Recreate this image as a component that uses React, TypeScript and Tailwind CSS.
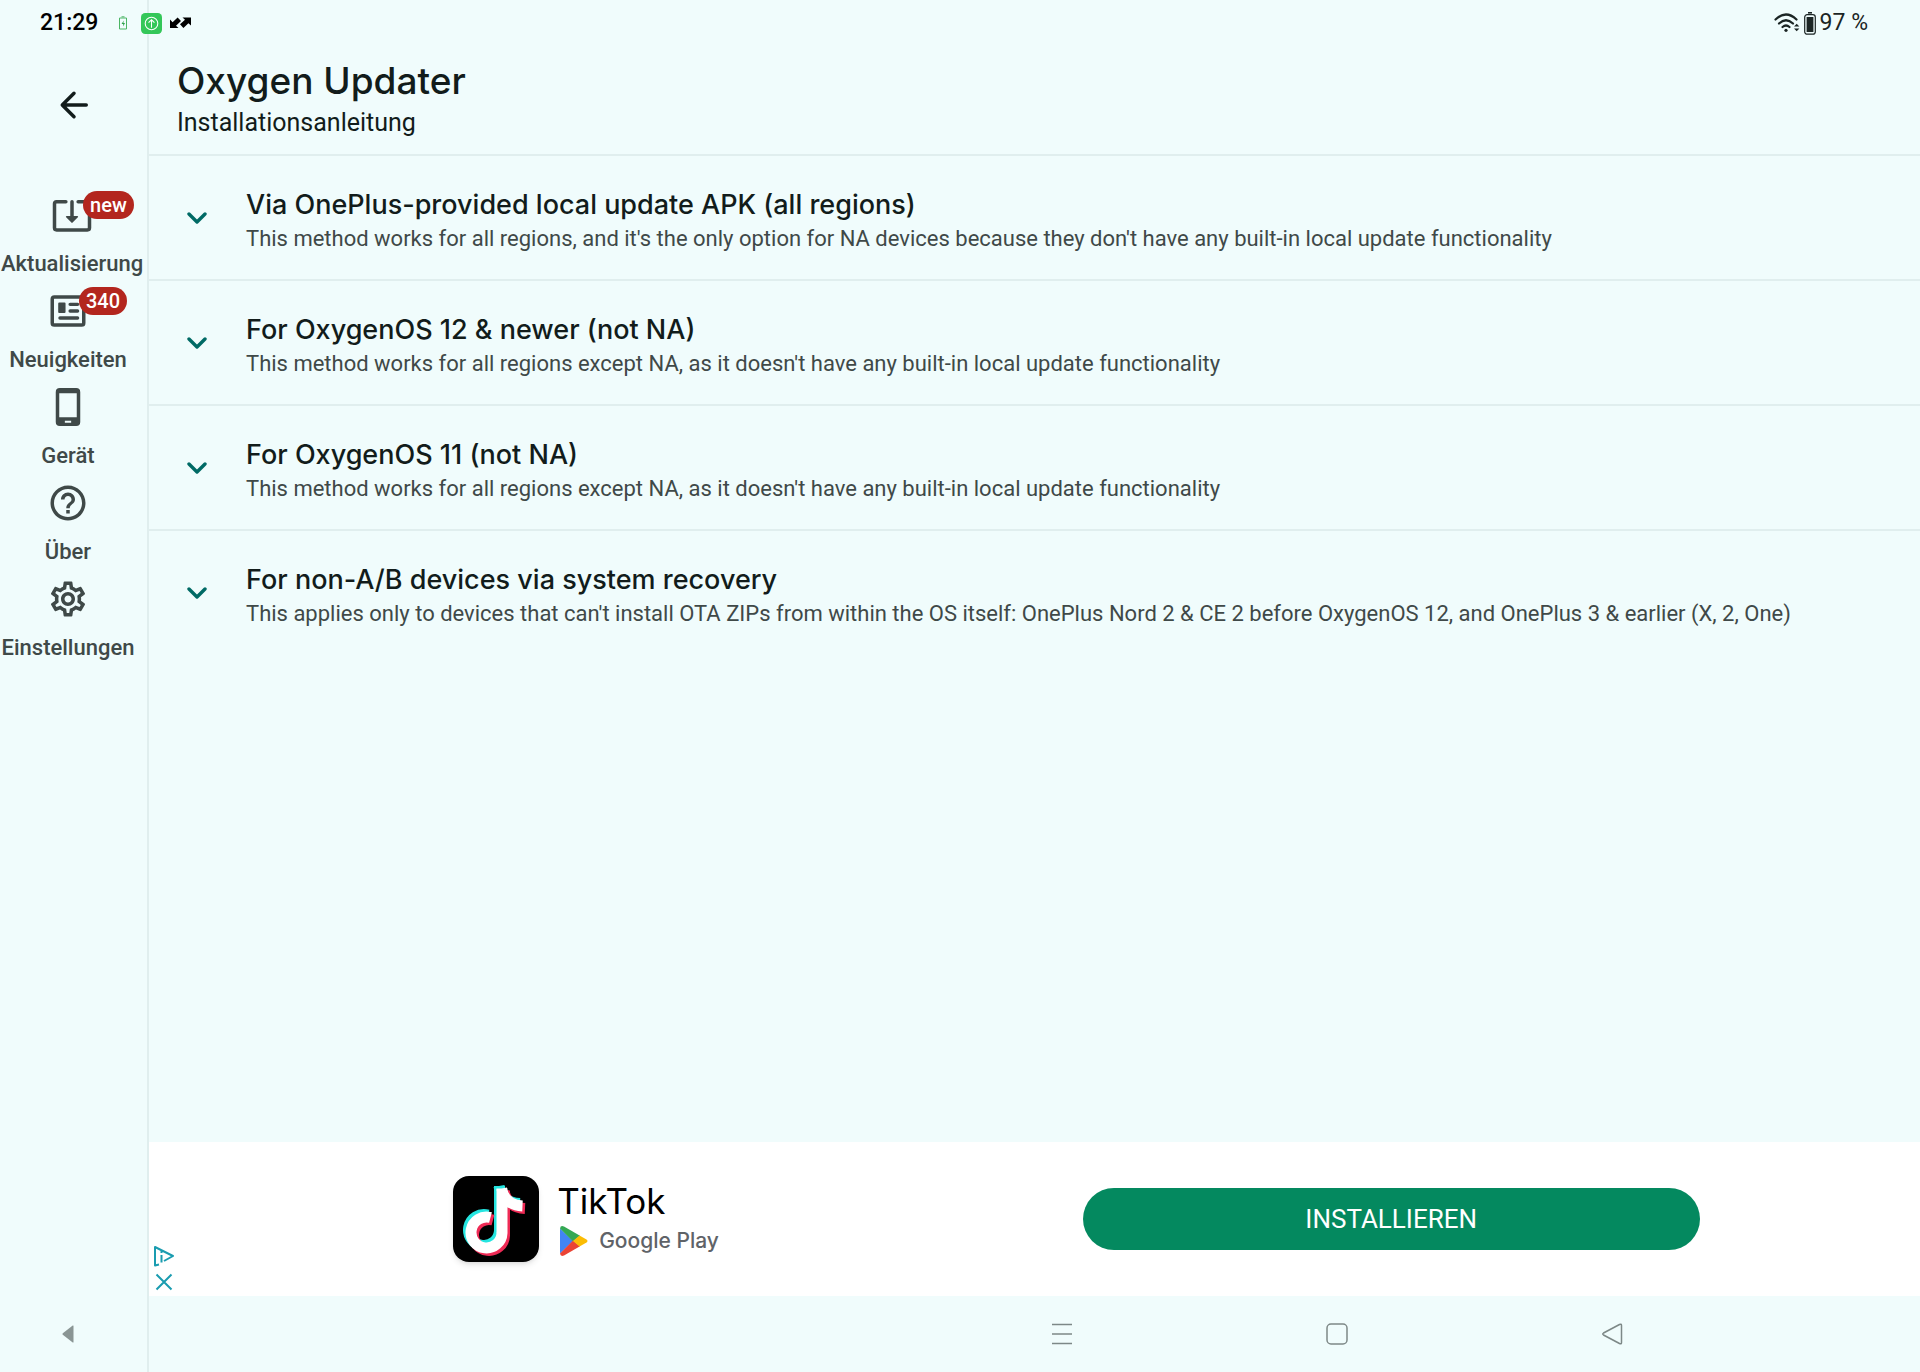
import type { ReactNode } from 'react';
import { MdHelpOutline, MdOutlineSettings } from 'react-icons/md';

interface NavItem {
  label: string;
  icon: ReactNode;
  badge?: string;
}

interface Guide {
  title: string;
  subtitle: string;
}

const UpdateIcon = () => (
  <svg viewBox="0 0 24 24" className="h-[42px] w-[42px]" fill="none" stroke="currentColor" strokeWidth="2" strokeLinecap="round" strokeLinejoin="round">
    <path d="M8.5 4.4H3.2Q2 4.4 2 5.6V19.3Q2 20.5 3.2 20.5H20.8Q22 20.5 22 19.3V5.6Q22 4.4 20.8 4.4H15.5" />
    <path d="M12 4.4V13" />
    <path d="M9 13h6l-3 3Z" fill="currentColor" strokeWidth="1" />
  </svg>
);

const NewsIcon = () => (
  <svg viewBox="0 0 24 24" className="h-[42px] w-[42px]" fill="none" stroke="currentColor" strokeWidth="2" strokeLinecap="round">
    <rect x="3" y="4" width="18" height="16" rx="1.2" />
    <rect x="6.4" y="7.2" width="4.2" height="6" rx="0.6" fill="currentColor" stroke="none" />
    <path d="M13.2 8.2h4.3M13.2 12h4.3M7.4 16h10.1" strokeWidth="1.9" />
  </svg>
);

const PhoneIcon = () => (
  <svg viewBox="0 0 24 24" className="h-[42px] w-[42px]" fill="currentColor">
    <path fillRule="evenodd" d="M7.3 1.2h9.4A2.3 2.3 0 0 1 19 3.5v17a2.3 2.3 0 0 1-2.3 2.3H7.3A2.3 2.3 0 0 1 5 20.5v-17a2.3 2.3 0 0 1 2.3-2.3ZM7 4.1v13.7h10V4.1ZM10.2 19.9v1.1h3.6v-1.1Z" />
  </svg>
);

const navItems: NavItem[] = [
  { label: 'Aktualisierung', icon: <UpdateIcon />, badge: 'new' },
  { label: 'Neuigkeiten', icon: <NewsIcon />, badge: '340' },
  { label: 'Gerät', icon: <PhoneIcon /> },
  { label: 'Über', icon: <MdHelpOutline size={42} /> },
  { label: 'Einstellungen', icon: <MdOutlineSettings size={42} /> },
];

const guides: Guide[] = [
  {
    title: 'Via OnePlus-provided local update APK (all regions)',
    subtitle: "This method works for all regions, and it's the only option for NA devices because they don't have any built-in local update functionality",
  },
  {
    title: 'For OxygenOS 12 & newer (not NA)',
    subtitle: "This method works for all regions except NA, as it doesn't have any built-in local update functionality",
  },
  {
    title: 'For OxygenOS 11 (not NA)',
    subtitle: "This method works for all regions except NA, as it doesn't have any built-in local update functionality",
  },
  {
    title: 'For non-A/B devices via system recovery',
    subtitle: "This applies only to devices that can't install OTA ZIPs from within the OS itself: OnePlus Nord 2 & CE 2 before OxygenOS 12, and OnePlus 3 & earlier (X, 2, One)",
  },
];

function StatusBar() {
  return (
    <div className="absolute inset-x-0 top-0 flex h-[46px] items-center justify-between pl-10 pr-[52px] text-[23px] text-black">
      <div className="flex items-center">
        <span className="font-medium">21:29</span>
        <svg viewBox="0 0 10 14" className="ml-5 h-[14px] w-[10px]" fill="none" stroke="#4bb564">
          <path d="M1.5 2h7v11h-7zM3.5 .8h3" />
          <path d="M5.8 4.5 3.5 8h1.7v2.5L7 7H5.4Z" fill="#2fa34c" stroke="none" />
        </svg>
        <svg viewBox="0 0 20 20" className="ml-[13px] h-[21px] w-[21px]" fill="none" stroke="#fff">
          <rect width="20" height="20" rx="4" fill="#34c759" stroke="none" />
          <circle cx="10" cy="10" r="6" />
          <path d="M10 14V6.5M7.2 9.2 10 6.5l2.8 2.7" />
        </svg>
        <svg viewBox="0 0 22 12" className="ml-2 h-3 w-[22px]" fill="#000">
          <path d="M0 2.5V11h8.5L6 8.7l5-4.6L7.6 .6 2.6 5.2Z" />
          <path d="M21 8.5V.5h-8.5L15 2.7l-5 4.6 3.4 3.6 5-4.7Z" />
        </svg>
      </div>
      <div className="flex items-center text-[#1b2524]">
        <svg viewBox="0 0 26 20" className="h-5 w-[26px]" fill="none" stroke="currentColor" strokeWidth="2.2" strokeLinecap="round">
          <path d="M1.5 6.5Q12 -3.5 22.5 6.5M5 10.5Q12 4 19 10.5M8.5 14Q12 11 15.5 14" />
          <circle cx="12" cy="17.3" r="1.6" fill="currentColor" stroke="none" />
          <path d="M20 13.5 22.7 10.8 25.4 13.5ZM20 15.5 22.7 18.2 25.4 15.5Z" fill="currentColor" stroke="none" />
        </svg>
        <svg viewBox="0 0 12 23" className="ml-1 h-[23px] w-3" fill="none" stroke="currentColor" strokeWidth="1.2">
          <rect x=".7" y="2.7" width="10.6" height="19.5" rx="2.5" />
          <rect x="2.6" y="5" width="6.8" height="15" fill="currentColor" stroke="none" />
          <path d="M4 .8h4" strokeWidth="1.6" />
        </svg>
        <span className="ml-1">97 %</span>
      </div>
    </div>
  );
}

function NavRail() {
  return (
    <aside className="flex w-[149px] shrink-0 flex-col border-r-2 border-[#e0eeee]">
      <div className="flex h-[194px] justify-center pt-[84px]">
        <button aria-label="Zurück" className="h-[42px] w-[42px] text-[#121c1b]">
          <svg viewBox="0 0 24 24" fill="none" stroke="currentColor" strokeWidth="2" strokeLinecap="round" strokeLinejoin="round">
            <path d="M19 12H5.5M12 5.3 5.3 12l6.7 6.7" />
          </svg>
        </button>
      </div>
      <nav className="flex flex-col items-start">
        {navItems.map((item) => (
          <a key={item.label} href="#" className="flex h-24 min-w-[136px] flex-col items-center gap-3.5 px-px text-[#3f4948]">
            <span className="relative">
              {item.icon}
              {item.badge && (
                <span className="absolute -top-[3px] left-8 flex h-7 items-center rounded-full bg-[#b3261e] px-[7px] text-xl font-medium text-white">
                  {item.badge}
                </span>
              )}
            </span>
            <span className="text-[22px] font-medium leading-7">{item.label}</span>
          </a>
        ))}
      </nav>
      <button aria-label="Leiste verschieben" className="mt-auto flex h-[76px] w-[136px] items-center justify-center text-[#8a9594]">
        <svg viewBox="0 0 12 18" className="h-[18px] w-3" fill="currentColor">
          <path d="M11.5 1v16q0 .8-.8.4L.8 9.8Q0 9 .8 8.2L10.7.6q.8-.4.8.4Z" />
        </svg>
      </button>
    </aside>
  );
}

function GuideRow({ guide }: { guide: Guide }) {
  return (
    <button className="flex h-[125px] w-full items-center border-t-2 border-[#e0eeee] text-left">
      <svg viewBox="0 0 20 12" className="ml-[38px] mr-[39px] h-3 w-5 shrink-0" fill="none" stroke="#006a65" strokeWidth="3.4" strokeLinecap="round" strokeLinejoin="round">
        <path d="M2 2l8 8 8-8" />
      </svg>
      <span className="flex flex-col whitespace-nowrap pt-1.5">
        <span className="font-['Inter'] text-[27px] font-medium leading-9 text-[#121c1b]">{guide.title}</span>
        <span className="text-[22px] leading-8 text-[#3f4948]">{guide.subtitle}</span>
      </span>
    </button>
  );
}

function AdBanner() {
  return (
    <section className="relative grid h-[154px] grid-cols-[304fr_629fr_617fr_220fr] items-center bg-white">
      <div className="col-start-2 flex items-center gap-[18px]">
        <svg viewBox="0 0 86 86" className="h-[86px] w-[86px] rounded-2xl shadow-md">
          <rect width="86" height="86" fill="#000" />
          <g fill="none" strokeWidth="11">
            <path d="M35 39A15.5 15.5 0 1 0 46.5 54.5V10M46 10C48 22 56 27 67 27.5" stroke="#25e5e0" />
            <path d="M40 44A15.5 15.5 0 1 0 51.5 59.5V15M51 15C53 26 61 32 72 32.5" stroke="#ee2a55" />
            <path d="M37.5 41.5A15.5 15.5 0 1 0 49 57V12.5M48.5 12.5C50.5 24 58.5 29.500 69.500 30" stroke="#fff" />
          </g>
        </svg>
        <div className="flex flex-col">
          <span className="font-['Inter'] text-[35px] leading-[44px] text-black">TikTok</span>
          <span className="flex items-center gap-2.5 font-['Inter'] text-[21px] font-medium leading-9 text-[#5f6368]">
            <svg viewBox="0 0 30 32" className="ml-0.5 h-8 w-[30px]">
              <path d="M1 3.5V28.5L14 16Z" fill="#4285f4" />
              <path d="M1 3.5Q1.5 0 5 1.5L21 10.8 14 16.5Z" fill="#34a853" />
              <path d="M1 28.5Q1.5 32 5 30.5L21 21.2 14 15.5Z" fill="#ea4335" />
              <path d="M20.5 10.5 27.5 14.5Q29.5 16 27.5 17.5L20.5 21.5 14 16Z" fill="#fbbc04" />
            </svg>
            Google Play
          </span>
        </div>
      </div>
      <button className="h-[62px] rounded-full bg-[#04895f] text-[26px] text-white">INSTALLIEREN</button>
      <div className="absolute bottom-[3px] left-1 flex flex-col gap-1 text-[#1a9cb0]">
        <button aria-label="AdChoices">
          <svg viewBox="0 0 22 22" className="h-[22px] w-[22px]" fill="none" stroke="currentColor" strokeWidth="2">
            <path d="M6 19.5 2 20.5V2L20 11 11 16M8.5 10v7.5M8.5 6v2" strokeLinejoin="round" />
          </svg>
        </button>
        <button aria-label="Werbung schließen">
          <svg viewBox="0 0 22 22" className="h-[22px] w-[22px]" fill="none" stroke="currentColor" strokeWidth="2">
            <path d="M3.5 3.5l15 15M18.5 3.5l-15 15" />
          </svg>
        </button>
      </div>
    </section>
  );
}

function SystemNav() {
  return (
    <footer className="flex h-[76px] items-center justify-end gap-[251px] pr-[296px] text-[#7d8887]">
      <button aria-label="Letzte Apps">
        <svg viewBox="0 0 24 24" className="h-6 w-6" fill="none" stroke="currentColor" strokeWidth="1.5">
          <path d="M2 2.5h20M2 12h20M2 21.5h20" />
        </svg>
      </button>
      <button aria-label="Startseite">
        <svg viewBox="0 0 24 24" className="h-6 w-6" fill="none" stroke="currentColor" strokeWidth="1.5">
          <rect x="2" y="2" width="20" height="20" rx="4" />
        </svg>
      </button>
      <button aria-label="Zurück">
        <svg viewBox="0 0 24 24" className="h-6 w-6" fill="none" stroke="currentColor" strokeWidth="1.5">
          <path d="M19.5 2.5Q21.5 1.5 21.5 3.5V20.5Q21.5 22.5 19.5 21.5L3.5 13Q2 12 3.5 11Z" />
        </svg>
      </button>
    </footer>
  );
}

export default function App() {
  return (
    <div className="relative flex min-h-screen bg-[#f0fcfc] font-['Roboto',sans-serif]">
      <NavRail />
      <div className="flex min-w-0 flex-1 flex-col">
        <header className="h-[154px] pl-7 pt-[59px] text-[#121c1b]">
          <h1 className="font-['Inter'] text-[37px] font-medium leading-[44px]">Oxygen Updater</h1>
          <p className="text-[25px] leading-10">Installationsanleitung</p>
        </header>
        <main className="flex-1">
          {guides.map((guide) => (
            <GuideRow key={guide.title} guide={guide} />
          ))}
        </main>
        <AdBanner />
        <SystemNav />
      </div>
      <StatusBar />
    </div>
  );
}
